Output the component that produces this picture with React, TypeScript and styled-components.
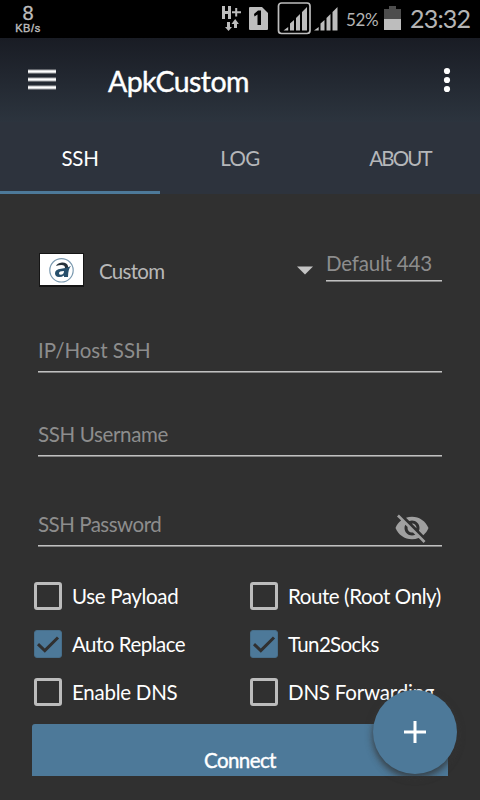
import React from 'react';
import styled, { createGlobalStyle } from 'styled-components';

const GlobalStyle = createGlobalStyle`
  * { box-sizing: border-box; }
  html, body { margin: 0; background: #303030; }
  body { font-family: Lato, "Open Sans", sans-serif; color: #fff; }
`;

const Screen = styled.div`
  position: relative;
  width: 480px;
  height: 800px;
  overflow: hidden;
  background: #303030;
  display: flex;
  flex-direction: column;
`;

const StatusBar = styled.div`
  height: 38px;
  flex: none;
  background: #000;
  color: #bdbdbd;
  display: flex;
  align-items: flex-start;
  justify-content: space-between;
  padding: 0 10px 0 14px;
`;

const NetSpeed = styled.div`
  width: 28px;
  padding-top: 2px;
  display: flex;
  flex-direction: column;
  align-items: center;
  font-family: "Liberation Sans", Arial, sans-serif;
`;

const SpeedValue = styled.span`
  font-size: 20px;
  line-height: 22px;
  -webkit-text-stroke: 0.3px #bdbdbd;
`;

const SpeedUnit = styled.span`
  font-size: 11px;
  line-height: 9px;
  letter-spacing: 0.6px;
  -webkit-text-stroke: 0.4px #bdbdbd;
`;

const StatusRight = styled.div`
  display: flex;
  align-items: flex-start;
`;

const StatusIcons = styled.svg`
  display: block;
  width: 122px;
  height: 38px;
  margin-right: 3px;
`;

const Battery = styled.svg`
  display: block;
  width: 18px;
  height: 38px;
  margin-right: 8px;
`;

const Text = styled.span<{ $size?: number; $spacing?: number; $color?: string }>`
  font-size: ${p => p.$size ?? 20.5}px;
  letter-spacing: ${p => p.$spacing ?? 0}px;
  color: ${p => p.$color ?? '#fff'};
  line-height: 28px;
  white-space: nowrap;
`;

const Percent = styled(Text)`
  width: 38px;
  margin-top: 6px;
`;

const Clock = styled(Text)`
  width: 60px;
  margin-top: 4px;
`;

const Toolbar = styled.header`
  height: 84px;
  flex: none;
  display: flex;
  align-items: center;
  padding: 0 29px 0 28px;
  background: linear-gradient(#191c24, #2c343e);
`;

const MenuIcon = styled.svg`
  width: 28px;
  height: 22px;
  margin-right: 52px;
`;

const Title = styled.h1`
  flex: 1;
  margin: 2px 0 0;
  font-size: 28.5px;
  line-height: 36px;
  font-weight: 400;
  letter-spacing: -0.55px;
  -webkit-text-stroke: 0.4px #fff;
`;

const MoreIcon = styled.svg`
  width: 8px;
  height: 26px;
`;

const Tabs = styled.nav`
  height: 72px;
  flex: none;
  display: grid;
  grid-template-columns: repeat(3, 1fr);
  background: #2d333d;
`;

const Tab = styled.div<{ $active?: boolean }>`
  display: flex;
  justify-content: center;
  padding-top: 22px;
  border-bottom: 3px solid ${p => (p.$active ? '#4d7999' : 'transparent')};
`;

const Form = styled.main`
  flex: 1;
  padding: 46px 32px 0;
`;

const ServerRow = styled.div`
  height: 42px;
  display: flex;
  align-items: flex-start;
  padding: 0 6px 0 7px;
`;

const Logo = styled.svg`
  width: 45px;
  height: 34px;
  margin-top: 13px;
`;

const ServerName = styled(Text)`
  flex: 1;
  margin: 17px 0 0 15px;
`;

const Caret = styled.svg`
  width: 16px;
  height: 9px;
  margin: 26px 13px 0 0;
`;

const Underlined = styled.div`
  border-bottom: 1px solid #808080;
  box-shadow: inset 0 -1px #c0c0c0;
`;

const PortField = styled(Underlined)`
  width: 116px;
  height: 42px;
  padding-top: 9px;
`;

const Field = styled(Underlined)<{ $top: number }>`
  height: 40px;
  margin: ${p => p.$top}px 6px 0;
  padding-top: 3px;
  display: flex;
  align-items: flex-start;
  justify-content: space-between;
`;

const EyeIcon = styled.svg`
  width: 36px;
  height: 36px;
  margin-right: 12px;
  flex: none;
`;

const Options = styled.div`
  display: grid;
  grid-template-columns: 216px 200px;
  grid-auto-rows: 48px;
  margin-top: 25px;
`;

const Option = styled.label`
  display: flex;
  align-items: center;
  padding-left: 2px;
  gap: 10px;
`;

const Box = styled.span<{ $checked?: boolean }>`
  width: 28px;
  height: 28px;
  flex: none;
  border-radius: 3px;
  border: ${p => (p.$checked ? '1px solid #476e8a' : '3px solid #bcbcbc')};
  background: ${p => (p.$checked ? '#4d7999' : 'transparent')};
  display: flex;
  align-items: center;
  justify-content: center;
`;

const ConnectButton = styled.button`
  display: block;
  width: 416px;
  height: 52px;
  margin: 8px 0 0;
  padding: 20px 0 0;
  border: 0;
  border-radius: 3px 3px 0 0;
  background: #4d7999;
  font-family: inherit;
  text-align: center;
  -webkit-text-stroke: 0.4px #fff;
`;

const Fab = styled.button`
  position: absolute;
  left: 373px;
  top: 690px;
  width: 84px;
  height: 84px;
  padding: 0;
  border: 0;
  border-radius: 50%;
  background: #4d7999;
  display: flex;
  align-items: center;
  justify-content: center;
  box-shadow: 0 4px 6px rgba(40, 40, 40, 0.6), 0 3px 9px rgba(80, 80, 80, 0.4);
`;

const options: { label: string; checked?: boolean; spacing: number }[] = [
  { label: 'Use Payload', spacing: -0.35 },
  { label: 'Route (Root Only)', spacing: -0.42 },
  { label: 'Auto Replace', checked: true, spacing: -0.5 },
  { label: 'Tun2Socks', checked: true, spacing: -0.65 },
  { label: 'Enable DNS', spacing: -0.25 },
  { label: 'DNS Forwarding', spacing: -0.2 },
];

function CheckMark() {
  return (
    <svg width="26" height="26" viewBox="0 0 26 26" fill="none">
      <path d="M3 13.2 9.8 19.6 23 6.5" stroke="#303030" strokeWidth="3" />
    </svg>
  );
}

function Signal({ x }: { x: number }) {
  return (
    <g transform={`translate(${x} 0)`}>
      <path d="M0 30.5 4.7 27V30.5ZM6.5 30.5V23.5L10.5 20V30.5ZM12.5 30.5V18L16.5 14V30.5ZM18.5 30.5V12L23.5 7V30.5Z" />
    </g>
  );
}

export default function App() {
  return (
    <>
      <GlobalStyle />
      <Screen>
        <StatusBar>
          <NetSpeed>
            <SpeedValue>8</SpeedValue>
            <SpeedUnit>KB/s</SpeedUnit>
          </NetSpeed>
          <StatusRight>
            <StatusIcons viewBox="220 0 122 38" fill="#bdbdbd">
              <path d="M221 6h3v5h3V6h3v13h-3v-5h-3v5h-3zM231 11.2h3.2V8h2v3.2h3.8v2h-3.8v3.3h-2v-3.3H231zM226 22h3v5h2l-3.500 4-3.500-4h2zM233 28v-4h-2.500l3.700-5 3.700 5H236v4z" />
              <path d="M248 8q0-1 1-1h12l6 6v16q0 1-1 1h-17q-1 0-1-1z" />
              <path d="M253 14l4-3.500h3V25h-3.500V14.500l-3 2z" fill="#000" />
              <rect x="277.500" y="3" width="31.500" height="30.500" rx="3" fill="none" stroke="#bdbdbd" strokeWidth="1.700" />
              <Signal x={282.5} />
              <Signal x={313} />
            </StatusIcons>
            <Percent $size={17} $spacing={-0.3} $color="#b4b4b4">52%</Percent>
            <Battery viewBox="0 0 18 38">
              <path d="M5 9V6h7v3h5v10H0V9z" fill="#4d4d4d" />
              <rect y="19" width="17" height="11" fill="#bdbdbd" />
            </Battery>
            <Clock $size={25} $spacing={-0.8} $color="#b4b4b4">23:32</Clock>
          </StatusRight>
        </StatusBar>

        <Toolbar>
          <MenuIcon viewBox="0 0 28 22">
            <path d="M0 2.500h28M0 10.500h28M0 18.500h28" stroke="#a9abae" strokeWidth="4" />
            <path d="M0 2.500h28M0 10.500h28M0 18.500h28" stroke="#fff" strokeWidth="2" />
          </MenuIcon>
          <Title>ApkCustom</Title>
          <MoreIcon viewBox="0 0 8 26" fill="#fff">
            <circle cx="4" cy="4" r="3.100" />
            <circle cx="4" cy="13" r="3.100" />
            <circle cx="4" cy="22" r="3.100" />
          </MoreIcon>
        </Toolbar>

        <Tabs>
          <Tab $active><Text $spacing={-0.3}>SSH</Text></Tab>
          <Tab><Text $color="#b5b7ba" $spacing={-0.6}>LOG</Text></Tab>
          <Tab><Text $color="#b5b7ba" $spacing={-1.8}>ABOUT</Text></Tab>
        </Tabs>

        <Form>
          <ServerRow>
            <Logo viewBox="0 0 45 34">
              <rect width="45" height="34" fill="#151515" />
              <rect x="1" y="1" width="43" height="31" fill="#fff" />
              <circle cx="22.500" cy="17.300" r="11.700" fill="none" stroke="#7b9ab0" strokeWidth="1.200" />
              <path d="M17 13q1-3 6-3.500 5-.2 6 3.500v2h-3q0-3-3.500-3-2.500 0-5.500 1z" fill="#26313a" />
              <path d="M32 13q-3 3-3 11h-4v-1.500Q23 24 20 24q-4 0-4-3.700 0-4 6-4.600 6-.7 10-2.700zM25 18q-5 0-5 2.300 0 1.500 1.800 1.500Q25 21.500 25 18z" fill="#274f6b" fillRule="evenodd" />
            </Logo>
            <ServerName $color="#b8b8b8" $spacing={-0.7}>Custom</ServerName>
            <Caret viewBox="0 0 16 9"><path d="M0 .5h16L8 8.500z" fill="#c4c4c4" /></Caret>
            <PortField><Text $color="#8d8d8d" $spacing={-0.2}>Default 443</Text></PortField>
          </ServerRow>

          <Field $top={51}><Text $color="#8d8d8d">IP/Host SSH</Text></Field>
          <Field $top={44}><Text $color="#8d8d8d" $spacing={-0.35}>SSH Username</Text></Field>
          <Field $top={50}>
            <Text $color="#8d8d8d" $spacing={-0.5}>SSH Password</Text>
            <EyeIcon viewBox="0 0 24 24" fill="#a0a0a0">
              <path d="M12 7c2.760 0 5 2.240 5 5 0 .65-.13 1.260-.36 1.830l2.920 2.920c1.510-1.260 2.700-2.890 3.430-4.750-1.730-4.390-6-7.500-11-7.500-1.400 0-2.740.25-3.980.7l2.160 2.160C10.740 7.130 11.350 7 12 7zM2 4.270l2.280 2.280.46.46C3.080 8.300 1.780 10.020 1 12c1.730 4.390 6 7.500 11 7.500 1.550 0 3.030-.3 4.380-.84l.42.42L19.730 22 21 20.730 3.270 3 2 4.270zM7.530 9.800l1.550 1.550c-.05.21-.08.43-.08.65 0 1.660 1.340 3 3 3 .22 0 .44-.03.65-.08l1.550 1.550c-.67.33-1.410.53-2.200.53-2.760 0-5-2.240-5-5 0-.79.2-1.530.53-2.200zm4.310-.78l3.150 3.150.02-.16c0-1.660-1.340-3-3-3l-.17.01z" />
            </EyeIcon>
          </Field>

          <Options>
            {options.map(o => (
              <Option key={o.label}>
                <Box $checked={o.checked}>{o.checked && <CheckMark />}</Box>
                <Text $spacing={o.spacing}>{o.label}</Text>
              </Option>
            ))}
          </Options>

          <ConnectButton><Text $spacing={-0.6}>Connect</Text></ConnectButton>
        </Form>

        <Fab aria-label="Add">
          <svg width="22" height="22" viewBox="0 0 22 22">
            <path d="M11 0v22M0 11h22" stroke="#fff" strokeWidth="3" />
          </svg>
        </Fab>
      </Screen>
    </>
  );
}
